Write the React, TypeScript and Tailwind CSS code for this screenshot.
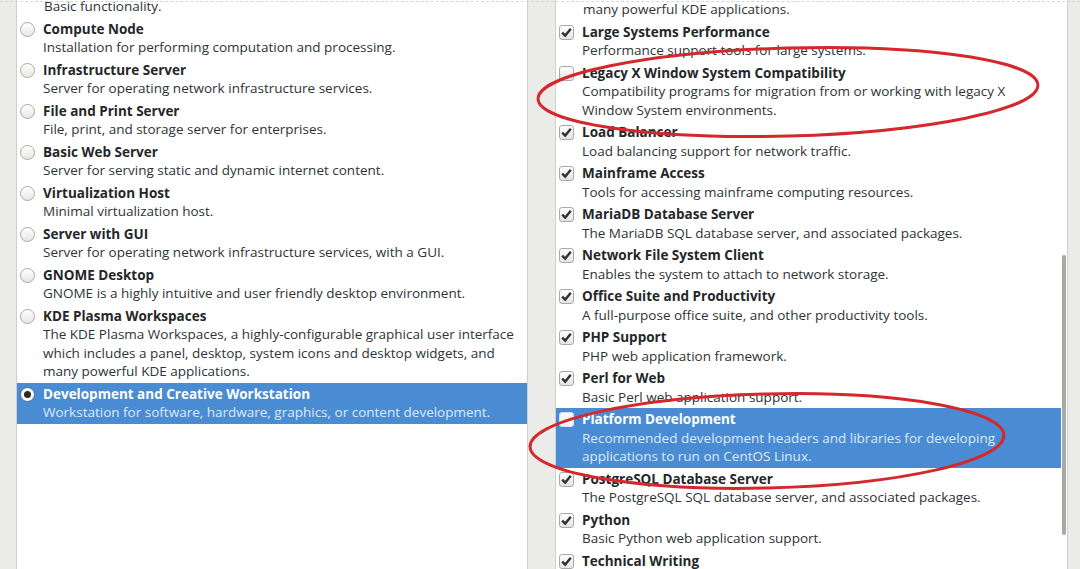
import { useState } from "react";

type Env = { title: string; desc: string[] };
type Addon = { title: string; desc: string[]; checked: boolean };

const environments: Env[] = [
  { title: "Compute Node", desc: ["Installation for performing computation and processing."] },
  { title: "Infrastructure Server", desc: ["Server for operating network infrastructure services."] },
  { title: "File and Print Server", desc: ["File, print, and storage server for enterprises."] },
  { title: "Basic Web Server", desc: ["Server for serving static and dynamic internet content."] },
  { title: "Virtualization Host", desc: ["Minimal virtualization host."] },
  { title: "Server with GUI", desc: ["Server for operating network infrastructure services, with a GUI."] },
  { title: "GNOME Desktop", desc: ["GNOME is a highly intuitive and user friendly desktop environment."] },
  {
    title: "KDE Plasma Workspaces",
    desc: [
      "The KDE Plasma Workspaces, a highly-configurable graphical user interface",
      "which includes a panel, desktop, system icons and desktop widgets, and",
      "many powerful KDE applications.",
    ],
  },
  {
    title: "Development and Creative Workstation",
    desc: ["Workstation for software, hardware, graphics, or content development."],
  },
];

const addons: Addon[] = [
  { title: "Large Systems Performance", desc: ["Performance support tools for large systems."], checked: true },
  {
    title: "Legacy X Window System Compatibility",
    desc: [
      "Compatibility programs for migration from or working with legacy X",
      "Window System environments.",
    ],
    checked: false,
  },
  { title: "Load Balancer", desc: ["Load balancing support for network traffic."], checked: true },
  { title: "Mainframe Access", desc: ["Tools for accessing mainframe computing resources."], checked: true },
  { title: "MariaDB Database Server", desc: ["The MariaDB SQL database server, and associated packages."], checked: true },
  { title: "Network File System Client", desc: ["Enables the system to attach to network storage."], checked: true },
  { title: "Office Suite and Productivity", desc: ["A full-purpose office suite, and other productivity tools."], checked: true },
  { title: "PHP Support", desc: ["PHP web application framework."], checked: true },
  { title: "Perl for Web", desc: ["Basic Perl web application support."], checked: true },
  {
    title: "Platform Development",
    desc: [
      "Recommended development headers and libraries for developing",
      "applications to run on CentOS Linux.",
    ],
    checked: false,
  },
  { title: "PostgreSQL Database Server", desc: ["The PostgreSQL SQL database server, and associated packages."], checked: true },
  { title: "Python", desc: ["Basic Python web application support."], checked: true },
  { title: "Technical Writing", desc: ["Basic technical writing tools."], checked: true },
];

function Radio({ on }: { on: boolean }) {
  return (
    <span
      className={`mt-[2px] flex h-[15px] w-[15px] shrink-0 items-center justify-center rounded-full border ${
        on ? "border-[#3a6fae] bg-white" : "border-[#a9aaa8] bg-gradient-to-b from-white to-[#e6e6e4]"
      }`}
    >
      {on && <span className="h-[7px] w-[7px] rounded-full bg-[#2e2a26]" />}
    </span>
  );
}

function Check({ on, selected }: { on: boolean; selected: boolean }) {
  return (
    <span
      className={`mt-[2px] flex h-[15px] w-[15px] shrink-0 items-center justify-center rounded-[3px] border ${
        selected ? "border-[#d6e2f0] bg-[#f4f6f8]" : "border-[#a9aaa8] bg-gradient-to-b from-white to-[#e4e4e2]"
      }`}
    >
      {on && (
        <svg width="13" height="13" viewBox="0 0 13 13">
          <path d="M2.2 6.6 L5.2 9.6 L10.8 2.8" fill="none" stroke="#2e3436" strokeWidth="2.4" />
        </svg>
      )}
    </span>
  );
}

function Row({
  title,
  desc,
  selected,
  control,
}: {
  title: string;
  desc: string[];
  selected: boolean;
  control: React.ReactNode;
}) {
  return (
    <div
      className={`flex gap-[8px] py-[2px] pl-[3px] ${
        selected ? "bg-[#4a8cd3] text-white" : "text-[#2e3436]"
      }`}
    >
      {control}
      <div className="min-w-0 leading-[18.5px]">
        <div className={`font-bold ${selected ? "text-white" : "text-[#242729]"}`}>{title}</div>
        {desc.map((d) => (
          <div key={d} className={`whitespace-nowrap ${selected ? "text-[#dfe9f5]" : ""}`}>
            {d}
          </div>
        ))}
      </div>
    </div>
  );
}

export default function App() {
  const [env, setEnv] = useState(environments.length - 1);

  return (
    <div
      className="relative flex h-[569px] w-[1080px] overflow-hidden bg-[#ebebea] text-[13.5px]"
      style={{ fontFamily: "'Open Sans', 'Noto Sans', sans-serif" }}
    >
      {/* Base environment list */}
      <div className="ml-[16px] w-[512px] shrink-0 overflow-hidden border-x border-[#cfcfcd] bg-white">
        <div className="-mt-[3px] pb-[2px] pl-[27px] leading-[18.5px] text-[#2e3436]">
          Basic functionality.
        </div>
        {environments.map((e, i) => (
          <div key={e.title} onClick={() => setEnv(i)}>
            <Row title={e.title} desc={e.desc} selected={i === env} control={<Radio on={i === env} />} />
          </div>
        ))}
      </div>

      {/* Add-ons list */}
      <div className="ml-[27px] flex w-[513px] shrink-0 border-x border-[#cfcfcd] bg-white">
        <div className="min-w-0 flex-1 overflow-hidden">
          <div className="pb-[2px] pl-[27px] leading-[18.5px] text-[#2e3436]">
            many powerful KDE applications.
          </div>
          {addons.map((a) => (
            <Row
              key={a.title}
              title={a.title}
              desc={a.desc}
              selected={a.title === "Platform Development"}
              control={<Check on={a.checked} selected={a.title === "Platform Development"} />}
            />
          ))}
        </div>
        <div className="w-[6px] shrink-0 pt-[255px]">
          <div className="ml-[1px] h-[280px] w-[4px] rounded-full bg-[#a8a8a6]" />
        </div>
      </div>

      {/* top edge */}
      <div className="pointer-events-none absolute left-0 right-0 top-[1px] border-t border-dashed border-[#d8d8d6]" />

      {/* hand-drawn annotations */}
      <svg className="pointer-events-none absolute inset-0" width="1080" height="569">
        <ellipse
          cx="788"
          cy="92"
          rx="250"
          ry="44"
          transform="rotate(-1.6 788 92)"
          fill="none"
          stroke="#d4282c"
          strokeWidth="3"
        />
        <ellipse
          cx="767"
          cy="441"
          rx="237"
          ry="47"
          transform="rotate(-1.4 767 441)"
          fill="none"
          stroke="#d4282c"
          strokeWidth="3"
        />
      </svg>
    </div>
  );
}
